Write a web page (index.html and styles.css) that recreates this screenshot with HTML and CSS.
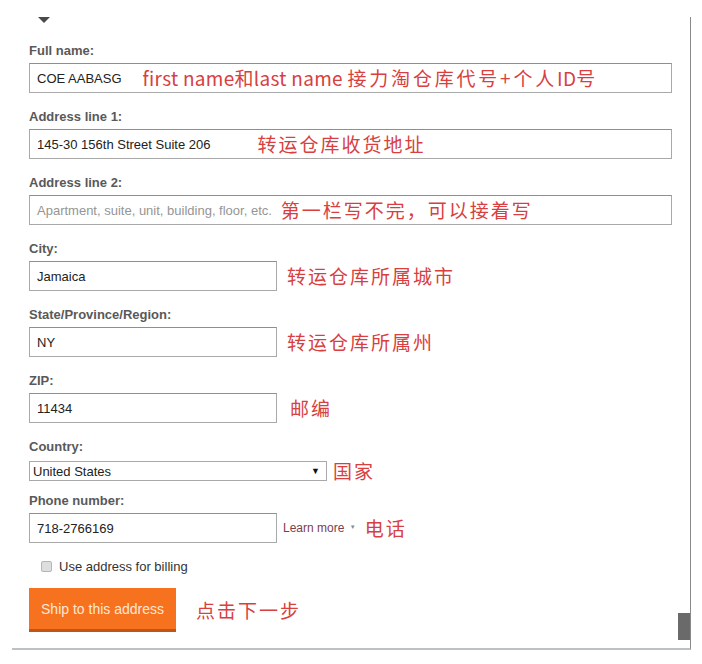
FILE: index.html
```html
<!DOCTYPE html>
<html lang="zh-CN">
<head>
<meta charset="utf-8">
<title>Shipping address</title>
<link rel="stylesheet" href="styles.css">
</head>
<body>
<div class="panel">
  <div class="caret"></div>

  <div class="field">
    <div class="label">Full name:</div>
    <div class="input wide"><span class="val">COE AABASG</span><span class="note n-name">first name和last name <span class="cjk">接力淘仓库代号+个人</span>ID<span class="cjk">号</span></span></div>
  </div>

  <div class="field">
    <div class="label">Address line 1:</div>
    <div class="input wide"><span class="val">145-30 156th Street Suite 206</span><span class="note n-addr1">转运仓库收货地址</span></div>
  </div>

  <div class="field">
    <div class="label">Address line 2:</div>
    <div class="input wide"><span class="val placeholder">Apartment, suite, unit, building, floor, etc.</span><span class="note n-addr2">第一栏写不完，可以接着写</span></div>
  </div>

  <div class="field">
    <div class="label">City:</div>
    <div class="row">
      <div class="input short"><span class="val">Jamaica</span></div>
      <span class="note n-side">转运仓库所属城市</span>
    </div>
  </div>

  <div class="field">
    <div class="label">State/Province/Region:</div>
    <div class="row">
      <div class="input short"><span class="val">NY</span></div>
      <span class="note n-side">转运仓库所属州</span>
    </div>
  </div>

  <div class="field">
    <div class="label">ZIP:</div>
    <div class="row">
      <div class="input short"><span class="val">11434</span></div>
      <span class="note n-zip">邮编</span>
    </div>
  </div>

  <div class="field">
    <div class="label">Country:</div>
    <div class="row">
      <div class="select"><span class="val">United States</span><span class="arrow">▼</span></div>
      <span class="note n-country">国家</span>
    </div>
  </div>

  <div class="field field-phone">
    <div class="label">Phone number:</div>
    <div class="row">
      <div class="input short"><span class="val">718-2766169</span></div>
      <span class="learn">Learn more <span class="tri">▼</span></span>
      <span class="note n-phone">电话</span>
    </div>
  </div>

  <div class="billing">
    <span class="check"></span>
    <span class="billing-text">Use address for billing</span>
  </div>

  <div class="actions">
    <button class="ship" type="button">Ship to this address</button>
    <span class="note n-next">点击下一步</span>
  </div>

  <div class="scroll-tab"></div>
</div>
</body>
</html>
```

FILE: styles.css
```css
html, body {
  margin: 0;
  padding: 0;
  background: #ffffff;
}

body {
  font-family: "Liberation Sans", Arial, sans-serif;
  color: #333;
  width: 702px;
  height: 664px;
  overflow: hidden;
}

.panel {
  position: relative;
  box-sizing: border-box;
  margin: 17px 0 0 12px;
  width: 679px;
  height: 633px;
  padding: 0 0 0 17px;
  border-right: 1px solid #8a8a8a;
  border-bottom: 2px solid #b9c3c7;
}

.caret {
  width: 0;
  height: 0;
  margin-left: 9px;
  border-left: 6px solid transparent;
  border-right: 6px solid transparent;
  border-top: 6px solid #4a4a4a;
  margin-bottom: 20px;
}

.field {
  margin-top: 16px;
}

.field-phone {
  margin-top: 10px;
}

.label {
  font-size: 13px;
  font-weight: bold;
  line-height: 16px;
  color: #595959;
  margin-bottom: 4px;
}

.input {
  box-sizing: border-box;
  height: 30px;
  border: 1px solid #a9a9a9;
  border-top-color: #8f8f8f;
  background: #fff;
  display: flex;
  align-items: center;
  padding-left: 7px;
  overflow: hidden;
  white-space: nowrap;
}

.input.wide {
  width: 643px;
}

.input.short {
  width: 248px;
}

.val {
  font-size: 13px;
  color: #222;
}

.val.placeholder {
  font-size: 13px;
  color: #959595;
}

.row {
  display: flex;
  align-items: center;
}

.note {
  font-family: "Noto Sans CJK SC", "Noto Sans", sans-serif;
  color: #d8403f;
  font-size: 19px;
  line-height: 24px;
  letter-spacing: 2px;
  white-space: nowrap;
}

.n-name {
  margin-left: 21px;
  letter-spacing: 0.3px;
}

.n-name .cjk {
  letter-spacing: 2.8px;
}

.n-addr1 {
  margin-left: 47px;
}

.n-addr2 {
  margin-left: 9px;
}

.n-side {
  margin-left: 10px;
}

.n-zip {
  margin-left: 13px;
}

.n-country {
  margin-left: 6px;
}

.n-phone {
  margin-left: 9px;
}

.n-next {
  margin-left: 20px;
}

.select {
  box-sizing: border-box;
  width: 298px;
  height: 20px;
  border: 1px solid #a9a9a9;
  display: flex;
  align-items: center;
  justify-content: space-between;
  padding: 0 3px 0 3px;
}

.arrow {
  font-size: 9px;
  color: #111;
  margin-right: 3px;
}

.learn {
  margin-left: 6px;
  font-size: 12px;
  color: #7e3d4c;
}

.tri {
  font-size: 6px;
  color: #888;
  vertical-align: 3px;
  margin-left: 2px;
}

.billing {
  display: flex;
  align-items: center;
  margin-top: 15px;
  margin-left: 12px;
  height: 16px;
}

.check {
  box-sizing: border-box;
  width: 11px;
  height: 11px;
  border: 1px solid #b5b5b5;
  background: #dedede;
  border-radius: 2px;
}

.billing-text {
  margin-left: 7px;
  font-size: 13px;
  color: #333;
}

.actions {
  display: flex;
  align-items: center;
  margin-top: 14px;
}

.ship {
  box-sizing: border-box;
  width: 147px;
  height: 44px;
  border: none;
  border-bottom: 3px solid #bd561b;
  background: #f7721f;
  color: #fde7d3;
  font-family: "Liberation Sans", Arial, sans-serif;
  font-size: 14px;
  padding: 0;
  text-align: center;
}

.scroll-tab {
  position: absolute;
  right: 0;
  bottom: 8px;
  width: 12px;
  height: 27px;
  background: #6a6a6a;
}
```
